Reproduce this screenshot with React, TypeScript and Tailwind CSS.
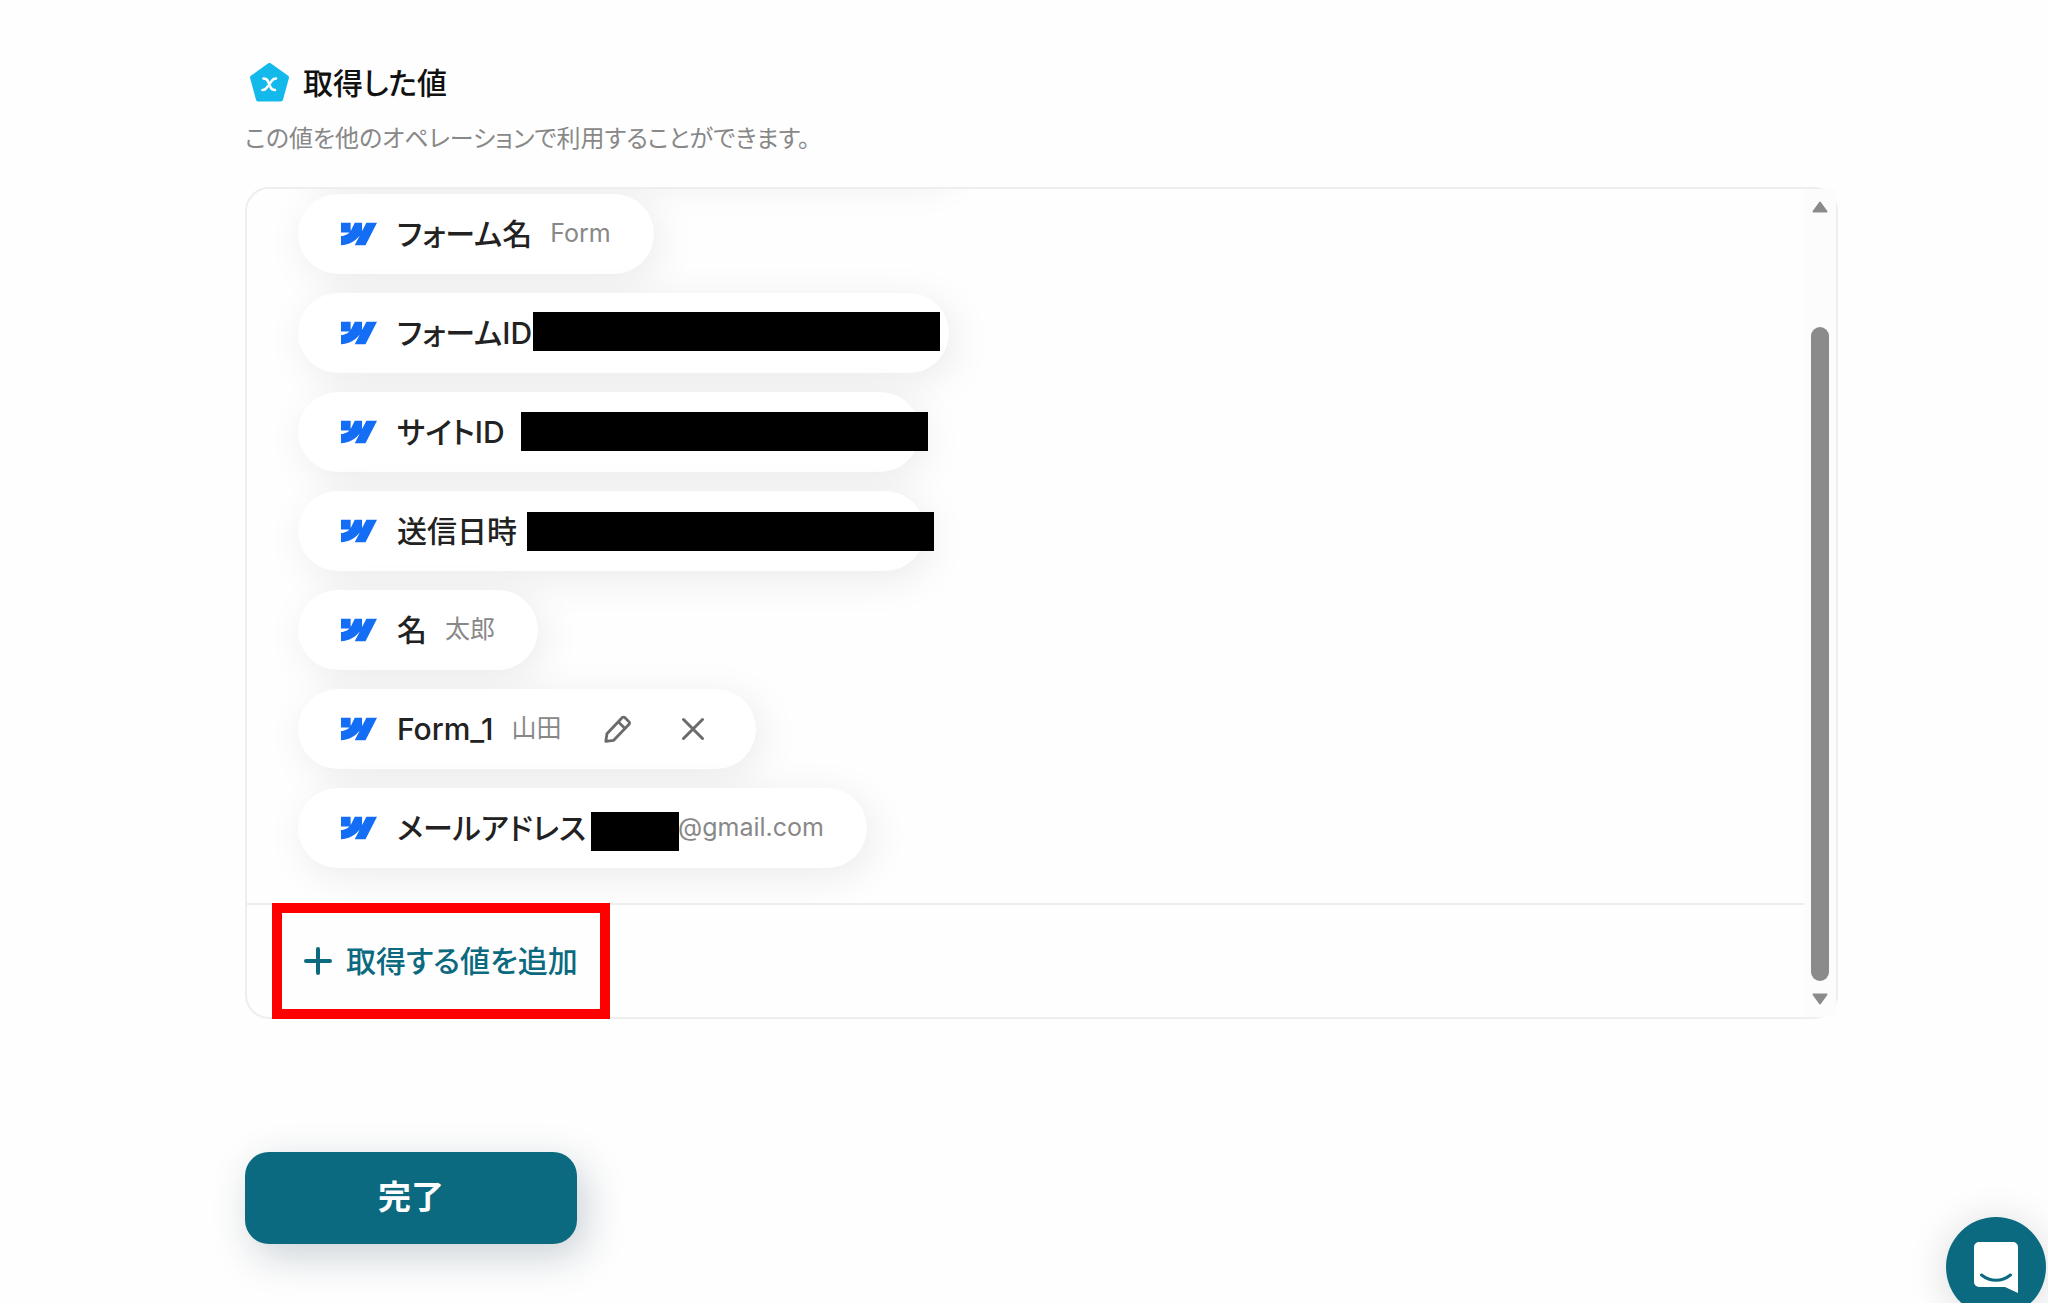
import type { ReactNode } from 'react';

interface CapturedValue {
  label: string;
  value?: string;
  width?: string;
  mask?: string;
  editable?: boolean;
}

const values: CapturedValue[] = [
  { label: 'フォーム名', value: 'Form' },
  { label: 'フォームID', width: 'w-[651px]', mask: 'left-[235px] top-[19px] w-[407px]' },
  { label: 'サイトID', width: 'w-[622px]', mask: 'left-[223px] top-[20px] w-[407px]' },
  { label: '送信日時', width: 'w-[627px]', mask: 'left-[229px] top-[21px] w-[407px]' },
  { label: '名', value: '太郎' },
  { label: 'Form_1', value: '山田', editable: true },
  {
    label: 'メールアドレス',
    value: '@gmail.com',
    width: 'w-[569px] justify-between',
    mask: 'left-[293px] top-[24px] w-[88px]',
  },
];

function WebflowLogo() {
  return (
    <svg className="w-9 h-6 shrink-0 text-[#146ef5]" viewBox="0 4 24 16" fill="currentColor" aria-hidden="true">
      <path d="M24 4.515l-7.658 14.97H9.149l3.205-6.204h-.144C9.566 16.713 5.621 18.973 0 19.485v-6.118s3.596-.213 5.71-2.435H0V4.515h6.417v5.278l.144-.001 2.622-5.277h4.854v5.244h.144l2.72-5.244H24z" />
    </svg>
  );
}

function PentagonIcon() {
  return (
    <svg className="w-[42px] h-[42px]" viewBox="0 0 42 42" aria-hidden="true">
      <path
        d="M20.5 3 38 15.500 32 37.500H9L3 15.500z"
        fill="#12b9ea"
        stroke="#12b9ea"
        strokeWidth="4"
        strokeLinejoin="round"
      />
      <path
        d="M14.500 16.500c2.500 0 3.500.5 4.300 2.500l2.900 6.500c.8 1.800 1.800 2.500 4.300 2.500M27 16.500c-1.800 0-2.800.5-4 2l-5.500 7.500c-1.100 1.500-2.200 2-4 2"
        fill="none"
        stroke="#fff"
        strokeWidth="2.600"
        strokeLinecap="round"
      />
    </svg>
  );
}

function PencilIcon() {
  return (
    <svg className="size-[30px]" viewBox="0 0 32 32" fill="none" stroke="#6b6b6b" strokeWidth="3" strokeLinejoin="round" aria-hidden="true">
      <path d="M3 29.200 4.200 21 20.600 3.800a1.8 1.8 0 0 1 2.600 0l4.600 4.600a1.8 1.8 0 0 1 0 2.600L11.200 28.200z" />
      <path d="m16.400 8.400 7 7" />
    </svg>
  );
}

function CloseIcon() {
  return (
    <svg className="size-6" viewBox="0 0 24 24" fill="none" stroke="#6b6b6b" strokeWidth="3" strokeLinecap="round" aria-hidden="true">
      <path d="M2.500 2.500l19 19M21.500 2.500l-19 19" />
    </svg>
  );
}

function Chip({ className = '', children }: { className?: string; children?: ReactNode }) {
  return (
    <li
      className={`relative flex h-20 items-center rounded-full bg-white px-[43px] shadow-[6px_8px_40px_rgba(0,0,0,0.08)] ${className}`}
    >
      {children}
    </li>
  );
}

function ValueChip({ label, value, width, mask, editable }: CapturedValue) {
  return (
    <Chip className={width}>
      <div className="flex items-center gap-5">
        <WebflowLogo />
        <span className="text-[30px] font-medium whitespace-nowrap text-[#222]">{label}</span>
      </div>
      {value && <span className="ml-[18px] text-[25px] text-[#888]">{value}</span>}
      {editable && (
        <div className="ml-[42px] mr-2 flex items-center gap-12">
          <button type="button" aria-label="編集">
            <PencilIcon />
          </button>
          <button type="button" aria-label="削除">
            <CloseIcon />
          </button>
        </div>
      )}
      {mask && <span className={`absolute h-[39px] bg-black ${mask}`} />}
    </Chip>
  );
}

function Scrollbar() {
  return (
    <div className="flex w-8 shrink-0 flex-col items-center bg-[#fcfcfc] pt-3 pb-3" aria-hidden="true">
      <svg className="w-4 h-3" viewBox="0 0 16 12">
        <path d="M8 1.500 14.500 10.500H1.500z" fill="#8b8b8b" stroke="#8b8b8b" strokeWidth="2" strokeLinejoin="round" />
      </svg>
      <div className="mt-[114px] mb-3 w-[18px] flex-1 rounded-full bg-[#8b8b8b]" />
      <svg className="w-4 h-3" viewBox="0 0 16 12">
        <path d="M8 10.500 1.500 1.500h13z" fill="#8b8b8b" stroke="#8b8b8b" strokeWidth="2" strokeLinejoin="round" />
      </svg>
    </div>
  );
}

export default function App() {
  return (
    <main className="min-h-screen bg-[#fefefe] pt-[60px] pr-[210px] pl-[245px] font-['Inter','Noto_Sans_CJK_JP',sans-serif] [font-feature-settings:'palt']">
      <header>
        <div className="flex items-center gap-3 pl-1">
          <PentagonIcon />
          <h1 className="text-[30px] leading-[46px] font-medium text-[#111]">取得した値</h1>
        </div>
        <p className="mt-4 text-[24px] leading-[34px] text-[#888]">この値を他のオペレーションで利用することができます。</p>
      </header>

      <section className="mt-[31px] flex rounded-3xl border-2 border-[#eee]">
        <div className="min-w-0 flex-1">
          <ul className="flex flex-col items-start gap-[19px] overflow-hidden rounded-tl-3xl px-[51px] pt-[5px] pb-[35px]">
            {/* row scrolled out above the list */}
            <Chip className="-mt-[99px] w-[660px]" />
            {values.map((item) => (
              <ValueChip key={item.label} {...item} />
            ))}
          </ul>
          <div className="border-t-2 border-[#eee] px-[25px]">
            <button
              type="button"
              className="relative flex h-28 items-center gap-3.5 px-8 text-[30px] font-medium text-[#0b6980]"
            >
              <svg className="w-7 h-7" viewBox="0 0 28 28" stroke="currentColor" strokeWidth="4" strokeLinecap="round" aria-hidden="true">
                <path d="M14 2v24M2 14h24" />
              </svg>
              取得する値を追加
              <span className="absolute -inset-y-0.5 inset-x-0 border-[10px] border-[#f00]" />
            </button>
          </div>
        </div>
        <Scrollbar />
      </section>

      <button
        type="button"
        className="mt-[133px] h-[92px] w-[332px] rounded-3xl bg-[#0b6980] text-[33px] font-bold text-white shadow-[8px_12px_40px_rgba(20,50,70,0.22)]"
      >
        完了
      </button>

      <button
        type="button"
        aria-label="チャットを開く"
        className="fixed right-0.5 -bottom-3.5 flex size-[100px] items-center justify-center rounded-full bg-[#0b6980] shadow-[0_4px_40px_rgba(0,0,0,0.14)]"
      >
        <svg className="w-11 h-[51px]" viewBox="0 0 44 51" aria-hidden="true">
          <path d="M5 0h34a5 5 0 0 1 5 5v46l-13-6H5a5 5 0 0 1-5-5V5a5 5 0 0 1 5-5z" fill="#fff" />
          <path d="M7.500 33c9 7 20 7 29 0" fill="none" stroke="#0b6980" strokeWidth="3" strokeLinecap="round" />
        </svg>
      </button>
    </main>
  );
}
